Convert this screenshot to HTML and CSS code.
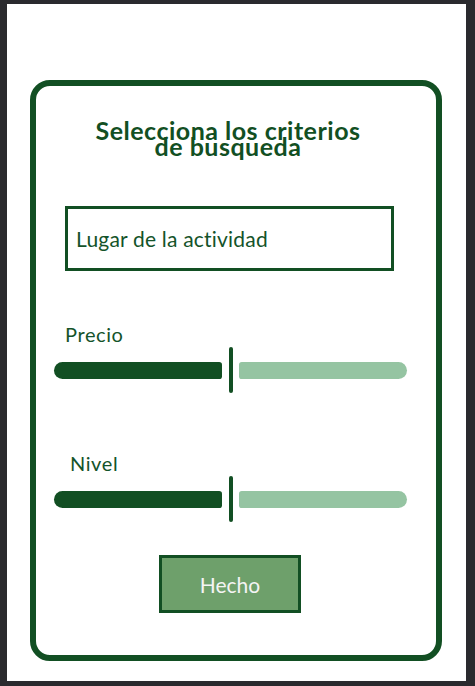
FILE: index.html
```html
<!DOCTYPE html>
<html lang="es">

<head>
    <meta charset="UTF-8">
    <meta name="viewport" content="width=device-width, initial-scale=1.0">
    <title>Criterios de busqueda</title>
    <link rel="stylesheet" href="styles.css">
</head>

<body>
    <div class="screen">
        <div class="card">
            <h1 class="title">Selecciona los criterios<br>de busqueda</h1>

            <div class="field">Lugar de la actividad</div>

            <div class="label">Precio</div>
            <div class="slider">
                <div class="bar bar-on"></div>
                <div class="thumb"></div>
                <div class="bar bar-off"></div>
            </div>

            <div class="label label-nivel">Nivel</div>
            <div class="slider">
                <div class="bar bar-on"></div>
                <div class="thumb"></div>
                <div class="bar bar-off"></div>
            </div>

            <button class="done">Hecho</button>
        </div>
    </div>
</body>

</html>
```

FILE: styles.css
```css
body {
    margin: 0;
    background: #2a2a2e;
    font-family: Lato, "Open Sans", sans-serif;
    color: #14532a;
}

.screen {
    margin: 4px 9px 5px 7px;
    height: 677px;
    background: #fff;
    padding-top: 76px;
    box-sizing: border-box;
}

.card {
    margin-left: 23px;
    width: 412px;
    height: 581px;
    box-sizing: border-box;
    border: 6px solid #124f23;
    border-radius: 20px;
}

.title {
    margin: 0;
    padding-top: 36px;
    padding-right: 16px;
    font-size: 25px;
    line-height: 16px;
    letter-spacing: 0.5px;
    font-weight: 700;
    text-align: center;
    color: #124f23;
}

.field {
    margin: 52px 0 0 29px;
    width: 329px;
    height: 65px;
    box-sizing: border-box;
    border: 3px solid #124f23;
    display: flex;
    align-items: center;
    padding-left: 8px;
    font-size: 21px;
    letter-spacing: 0.2px;
}

.label {
    margin: 51px 0 0 29px;
    font-size: 20px;
    line-height: 24px;
    letter-spacing: 0.6px;
}

.label-nivel {
    margin-top: 58px;
    margin-left: 34px;
}

.slider {
    margin: 1px 0 0 18px;
    display: flex;
    align-items: center;
    height: 46px;
}

.bar {
    width: 168px;
    height: 17px;
}

.bar-on {
    background: #124f23;
    border-radius: 9px 3px 3px 9px;
}

.bar-off {
    background: #95c4a2;
    border-radius: 3px 9px 9px 3px;
}

.thumb {
    width: 4px;
    height: 46px;
    margin: 0 6px 0 7px;
    background: #124f23;
    border-radius: 2px;
}

.done {
    display: block;
    margin: 33px 0 0 123px;
    width: 142px;
    height: 58px;
    border: 3px solid #124f23;
    background: #6ea06b;
    color: #f4f4f4;
    font-family: Lato, "Open Sans", sans-serif;
    font-size: 21px;
    padding: 0;
}
```
